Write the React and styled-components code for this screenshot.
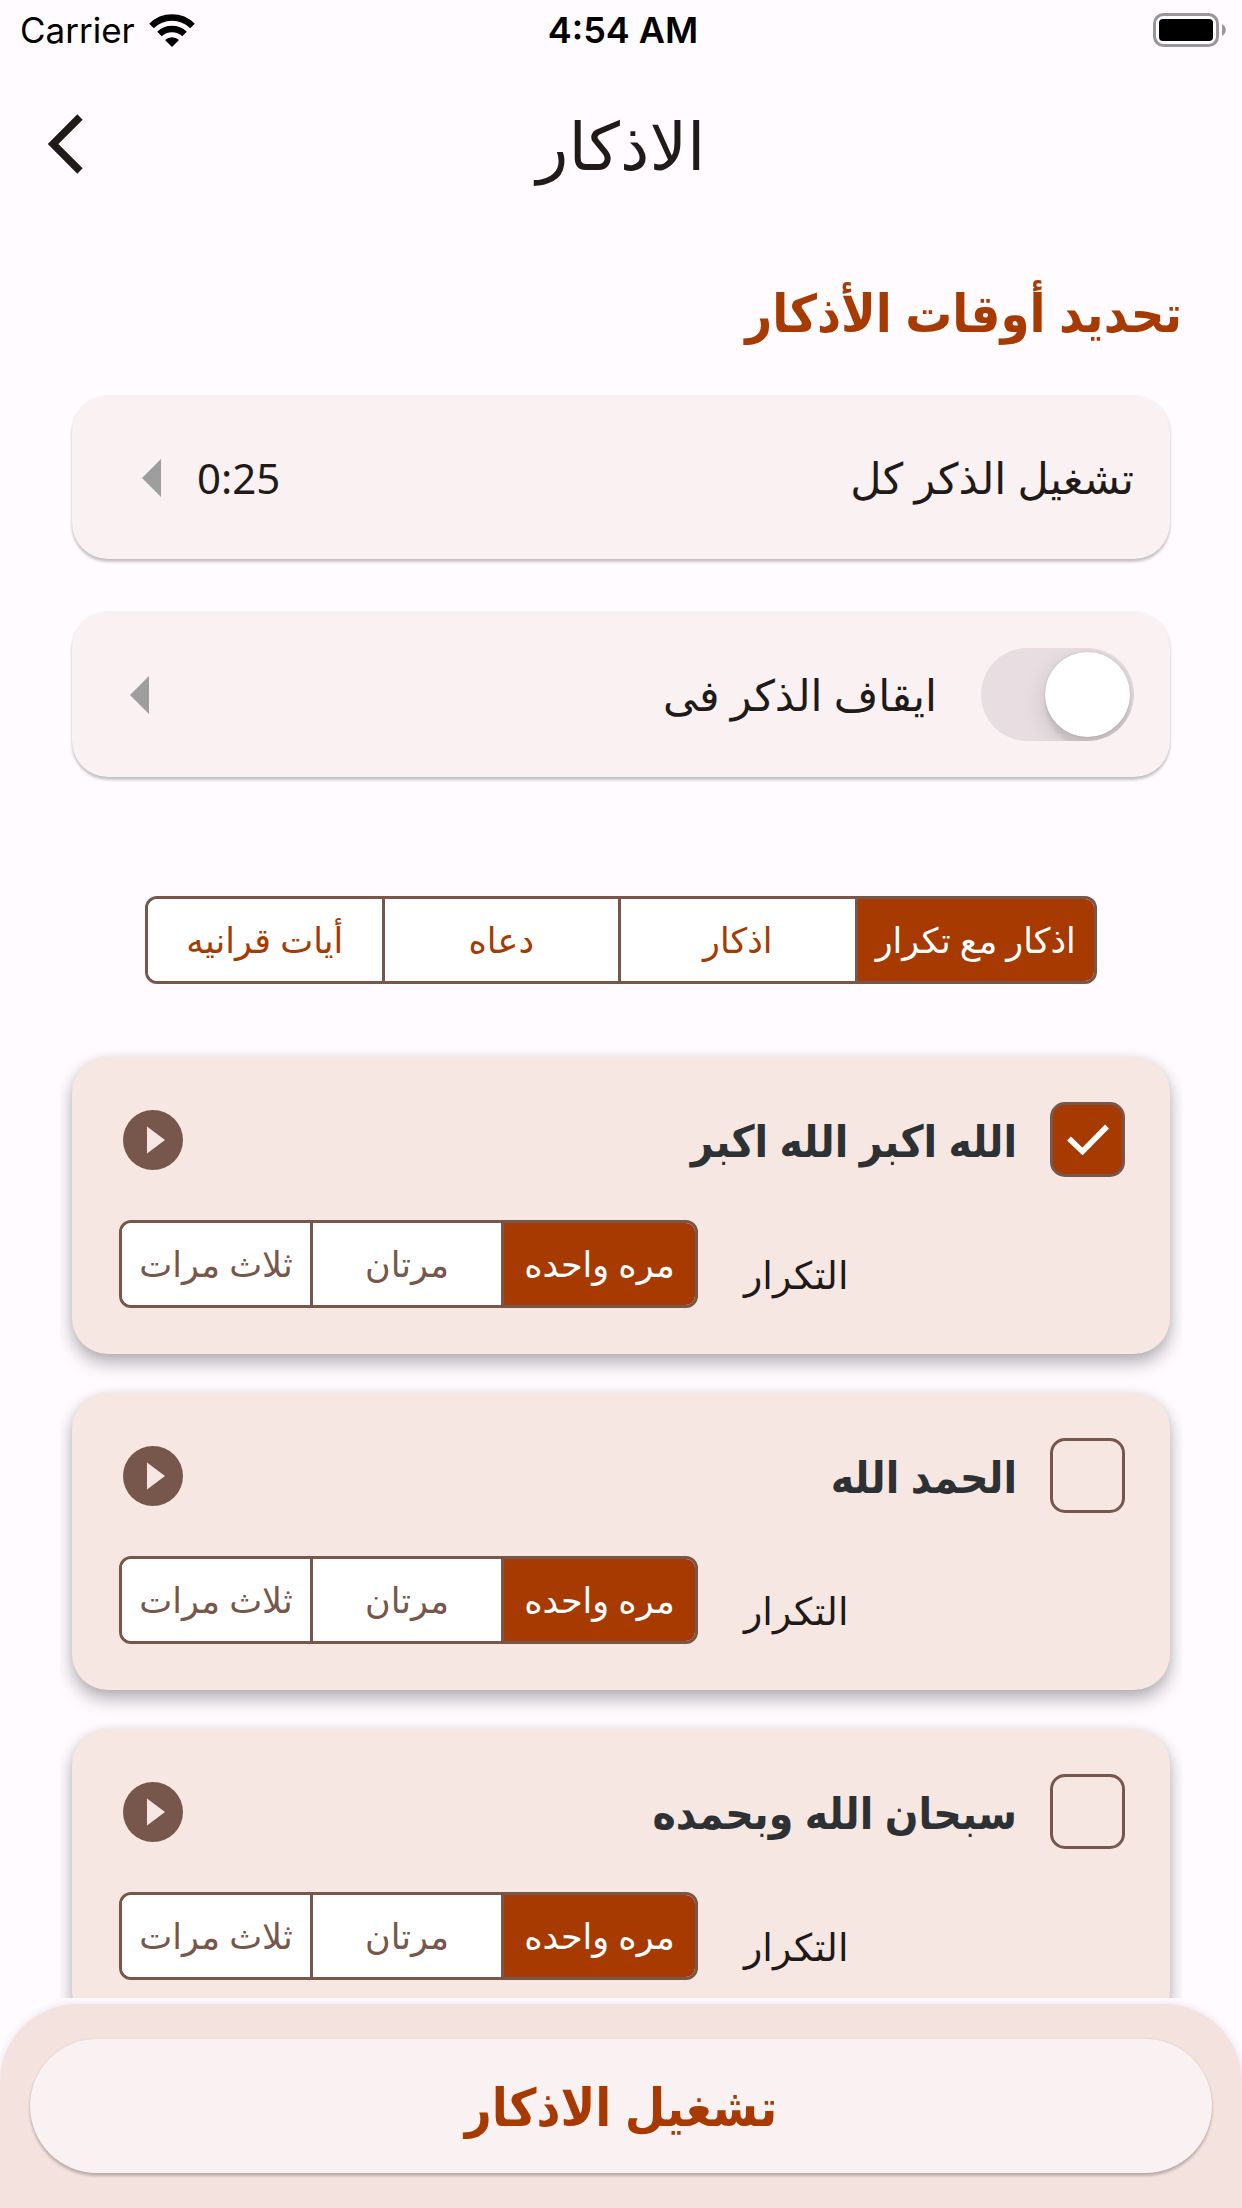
import React, { useState } from 'react';
import styled, { createGlobalStyle } from 'styled-components';

const GlobalStyle = createGlobalStyle`
  * {
    box-sizing: border-box;
  }
  body {
    margin: 0;
    background: #fffbff;
    color: #201a18;
    font-family: 'Noto Sans', 'DejaVu Sans', sans-serif;
  }
  button, input {
    font-family: inherit;
    margin: 0;
  }
`;

const brand = '#a73a00';
const outline = '#77574b';
const boldFont = "'Noto Sans', 'DejaVu Sans Condensed', 'DejaVu Sans', sans-serif";

const Screen = styled.div`
  display: flex;
  flex-direction: column;
  height: 100vh;
  overflow: hidden;
`;

const StatusBar = styled.div`
  display: grid;
  grid-template-columns: 1fr auto 1fr;
  align-items: center;
  height: 60px;
  padding: 0 16px 0 20px;
  color: #000000;
  font-family: Inter, sans-serif;
  font-size: 36px;
  line-height: 60px;
`;

const Carrier = styled.div`
  display: flex;
  align-items: center;
  gap: 14px;
  font-size: 35px;
`;

const Clock = styled.div`
  font-weight: 600;
`;

const BatteryIcon = styled.svg`
  justify-self: end;
`;

const AppBar = styled.header`
  display: grid;
  grid-template-columns: 1fr auto 1fr;
  align-items: center;
  height: 168px;
  padding: 0 36px;
`;

const BackButton = styled.button`
  display: flex;
  justify-self: start;
  padding: 12px;
  border: 0;
  background: none;
`;

const Title = styled.h1`
  margin: 0;
  font-size: 66px;
  font-weight: 400;
  line-height: 84px;
`;

const Settings = styled.section`
  padding: 48px 72px 0;
`;

const Heading = styled.h2`
  margin: 0 -12px 48px;
  color: ${brand};
  font-family: ${boldFont};
  font-size: 52px;
  font-weight: 700;
  line-height: 72px;
`;

const SettingCard = styled.div`
  display: flex;
  align-items: center;
  justify-content: space-between;
  min-height: 163px;
  margin-bottom: 53px;
  padding: 36px 36px 36px 48px;
  border-radius: 36px;
  background: #faf1f2;
  box-shadow: 0 3px 3px rgba(0, 0, 0, 0.22), 0 0 3px rgba(0, 0, 0, 0.08);
  font-size: 43px;
  line-height: 60px;
`;

const TimeButton = styled.button`
  display: flex;
  align-items: center;
  gap: 36px;
  padding: 0 22px;
  border: 0;
  background: none;
  color: #201a18;
  font-size: 42px;
`;

const ArrowButton = styled.button`
  display: flex;
  padding: 10px;
  border: 0;
  background: none;
`;

const SwitchLabel = styled.label`
  display: flex;
  align-items: center;
  gap: 44px;
`;

const Switch = styled.input`
  appearance: none;
  display: flex;
  align-items: center;
  width: 153px;
  height: 93px;
  padding: 0 4px;
  border-radius: 47px;
  background: ${props => (props.checked ? brand : '#e8dee1')};
  overflow: hidden;
  &::before {
    content: '';
    width: 85px;
    height: 85px;
    margin-inline-start: ${props => (props.checked ? '60px' : '0')};
    border-radius: 50%;
    background: #ffffff;
    box-shadow: 0 9px 24px rgba(0, 0, 0, 0.15), 0 9px 3px rgba(0, 0, 0, 0.06), 0 0 3px rgba(0, 0, 0, 0.12);
  }
`;

const Segments = styled.div`
  display: grid;
  grid-auto-flow: column;
  grid-auto-columns: 1fr;
  border: 3px solid ${outline};
  border-radius: 12px;
  background: #ffffff;
  overflow: hidden;
`;

const Tabs = styled(Segments)`
  margin: 66px 145px 61px;
`;

const segment = `
  display: flex;
  align-items: center;
  justify-content: center;
  height: 82px;
  padding: 0;
  border: 0;
  font-size: 35px;
  line-height: 48px;
  white-space: nowrap;
  & + & {
    border-inline-start: 3px solid ${outline};
  }
`;

const Tab = styled.button`
  ${segment}
  background: ${props => (props.$active ? brand : '#ffffff')};
  color: ${props => (props.$active ? '#ffffff' : brand)};
`;

const RepeatOption = styled.label`
  ${segment}
  background: ${props => (props.$active ? brand : '#ffffff')};
  color: ${props => (props.$active ? '#ffffff' : outline)};
`;

const HiddenRadio = styled.input`
  appearance: none;
  width: 0;
  height: 0;
`;

const List = styled.main`
  flex: 1;
  min-height: 0;
  margin: 0 60px 6px;
  padding: 12px 12px 0;
  overflow-y: auto;
  scrollbar-width: none;
`;

const ZikrCard = styled.article`
  margin-bottom: 39px;
  padding: 45px 45px 46px;
  border-radius: 36px;
  background: #f6e7e3;
  box-shadow: 0 9px 18px rgba(0, 0, 0, 0.3), 0 0 9px rgba(0, 0, 0, 0.06);
`;

const ZikrRow = styled.div`
  display: flex;
  align-items: center;
  justify-content: space-between;
  height: 75px;
`;

const ZikrLabel = styled.label`
  display: flex;
  align-items: center;
  gap: 33px;
  color: #2e3133;
  font-family: ${boldFont};
  font-size: 44px;
  font-weight: 700;
  line-height: 72px;
`;

const CheckWrap = styled.span`
  display: grid;
  place-items: center;
  & > * {
    grid-area: 1 / 1;
  }
`;

const Checkbox = styled.input`
  appearance: none;
  width: 75px;
  height: 75px;
  border: 3px solid ${outline};
  border-radius: 15px;
  background: ${props => (props.checked ? brand : 'transparent')};
`;

const PlayButton = styled.button`
  display: flex;
  padding: 0;
  margin-inline-end: 6px;
  border: 0;
  background: none;
`;

const RepeatRow = styled.fieldset`
  display: flex;
  align-items: center;
  justify-content: flex-end;
  gap: 46px;
  min-width: 0;
  margin: 43px 0 0;
  padding: 0 0 0 2px;
  border: 0;
`;

const RepeatTitle = styled.span`
  padding-top: 20px;
  font-size: 38px;
  line-height: 60px;
`;

const Repeat = styled(Segments)`
  width: 579px;
`;

const Footer = styled.footer`
  padding: 35px 30px;
  border-radius: 78px 78px 0 0;
  background: #f4e2de;
  box-shadow: 0 0 9px rgba(60, 40, 90, 0.12);
`;

const StartButton = styled.button`
  width: 100%;
  height: 134px;
  border: 0;
  border-radius: 67px;
  background: #faf1f2;
  box-shadow: 0 3px 3px rgba(0, 0, 0, 0.22), 0 0 3px rgba(0, 0, 0, 0.08);
  color: ${brand};
  font-family: ${boldFont};
  font-size: 52px;
  font-weight: 700;
  line-height: 72px;
`;

const LeftArrow = () => (
  <svg width="19" height="38" viewBox="0 0 19 38" aria-hidden="true">
    <path d="M19 0V38L0 19Z" fill="#9e9e9e" />
  </svg>
);

const tabs = ['اذكار مع تكرار', 'اذكار', 'دعاه', 'أيات قرانيه'];
const repeats = ['مره واحده', 'مرتان', 'ثلاث مرات'];
const azkar = [
  { id: 1, text: 'الله اكبر الله اكبر', checked: true },
  { id: 2, text: 'الحمد الله', checked: false },
  { id: 3, text: 'سبحان الله وبحمده', checked: false }
];

////////// One zikr with its repeat choice

const Zikr = ({ zikr }) => {
  const [checked, setChecked] = useState(zikr.checked);
  const [repeat, setRepeat] = useState(0);

  return (
    <ZikrCard>
      <ZikrRow>
        <ZikrLabel>
          <CheckWrap>
            <Checkbox type="checkbox" checked={checked} onChange={e => setChecked(e.target.checked)} />
            {checked && (
              <svg width="42" height="31" viewBox="0 0 42 31" aria-hidden="true">
                <path d="M2 14.500L15.500 27.500L40 2.500" fill="none" stroke="#ffffff" strokeWidth="5.500" />
              </svg>
            )}
          </CheckWrap>
          {zikr.text}
        </ZikrLabel>
        <PlayButton aria-label="play">
          <svg width="60" height="60" viewBox="0 0 60 60" aria-hidden="true">
            <circle cx="30" cy="30" r="30" fill={outline} />
            <path d="M24 16.500V43.500L42 30Z" fill="#f6e7e3" />
          </svg>
        </PlayButton>
      </ZikrRow>
      <RepeatRow>
        <RepeatTitle>التكرار</RepeatTitle>
        <Repeat>
          {repeats.map((name, i) => (
            <RepeatOption key={name} $active={repeat === i}>
              <HiddenRadio type="radio" name={`repeat-${zikr.id}`} checked={repeat === i} onChange={() => setRepeat(i)} />
              {name}
            </RepeatOption>
          ))}
        </Repeat>
      </RepeatRow>
    </ZikrCard>
  );
};

const App = () => {
  const [tab, setTab] = useState(0);
  const [stop, setStop] = useState(false);

  return (
    <Screen dir="rtl" lang="ar">
      <GlobalStyle />
      <StatusBar dir="ltr">
        <Carrier>
          Carrier
          <svg width="46" height="33" viewBox="0 0 46 33" aria-hidden="true">
            <path d="M2.500 12A29 29 0 0 1 43.500 12" fill="none" stroke="#000000" strokeWidth="6.500" />
            <path d="M10.500 20A18 18 0 0 1 35.500 20" fill="none" stroke="#000000" strokeWidth="6.500" />
            <path d="M16 26A10 10 0 0 1 30 26L23 33Z" fill="#000000" />
          </svg>
        </Carrier>
        <Clock>4:54 AM</Clock>
        <BatteryIcon width="73" height="34" viewBox="0 0 73 34" aria-hidden="true">
          <rect x="1.500" y="1.500" width="63" height="31" rx="9" fill="#ffffff" stroke="#98969a" strokeWidth="3" />
          <rect x="6" y="6" width="54" height="22" rx="4" fill="#000000" />
          <path d="M69 11C74 14 74 20 69 23Z" fill="#98969a" />
        </BatteryIcon>
      </StatusBar>
      <AppBar dir="ltr">
        <BackButton aria-label="back">
          <svg width="36" height="60" viewBox="0 0 36 60" aria-hidden="true">
            <path d="M32 3L5 30L32 57" fill="none" stroke="#201a18" strokeWidth="7.500" />
          </svg>
        </BackButton>
        <Title dir="rtl">الاذكار</Title>
      </AppBar>
      <Settings>
        <Heading>تحديد أوقات الأذكار</Heading>
        <SettingCard>
          <span>تشغيل الذكر كل</span>
          <TimeButton>
            0:25
            <LeftArrow />
          </TimeButton>
        </SettingCard>
        <SettingCard>
          <SwitchLabel>
            <Switch type="checkbox" role="switch" checked={stop} onChange={e => setStop(e.target.checked)} />
            ايقاف الذكر فى
          </SwitchLabel>
          <ArrowButton aria-label="choose">
            <LeftArrow />
          </ArrowButton>
        </SettingCard>
      </Settings>
      <Tabs>
        {tabs.map((name, i) => (
          <Tab key={name} $active={tab === i} onClick={() => setTab(i)}>{name}</Tab>
        ))}
      </Tabs>
      <List>
        {azkar.map(zikr => (
          <Zikr key={zikr.id} zikr={zikr} />
        ))}
      </List>
      <Footer>
        <StartButton>تشغيل الاذكار</StartButton>
      </Footer>
    </Screen>
  );
};

export default App;
